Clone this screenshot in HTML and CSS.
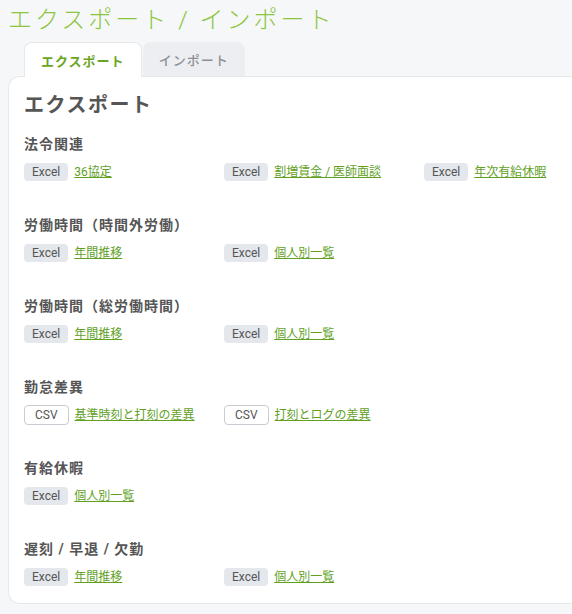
FILE: index.html
```html
<!DOCTYPE html>
<html lang="ja">
<head>
<meta charset="utf-8">
<title>エクスポート / インポート</title>
<link rel="stylesheet" href="styles.css">
</head>
<body>
<h1 class="page-title">エクスポート / インポート</h1>
<div class="tabs">
  <div class="tab tab-active">エクスポート</div>
  <div class="tab tab-inactive">インポート</div>
</div>
<div class="card">
  <h2 class="card-title">エクスポート</h2>

  <section class="group">
    <h3 class="group-title">法令関連</h3>
    <div class="items">
      <div class="item"><span class="badge badge-excel">Excel</span><a class="link" href="#">36協定</a></div>
      <div class="item"><span class="badge badge-excel">Excel</span><a class="link" href="#">割増賃金 / 医師面談</a></div>
      <div class="item"><span class="badge badge-excel">Excel</span><a class="link" href="#">年次有給休暇</a></div>
    </div>
  </section>

  <section class="group">
    <h3 class="group-title">労働時間（時間外労働）</h3>
    <div class="items">
      <div class="item"><span class="badge badge-excel">Excel</span><a class="link" href="#">年間推移</a></div>
      <div class="item"><span class="badge badge-excel">Excel</span><a class="link" href="#">個人別一覧</a></div>
    </div>
  </section>

  <section class="group">
    <h3 class="group-title">労働時間（総労働時間）</h3>
    <div class="items">
      <div class="item"><span class="badge badge-excel">Excel</span><a class="link" href="#">年間推移</a></div>
      <div class="item"><span class="badge badge-excel">Excel</span><a class="link" href="#">個人別一覧</a></div>
    </div>
  </section>

  <section class="group">
    <h3 class="group-title">勤怠差異</h3>
    <div class="items">
      <div class="item"><span class="badge badge-csv">CSV</span><a class="link" href="#">基準時刻と打刻の差異</a></div>
      <div class="item"><span class="badge badge-csv">CSV</span><a class="link" href="#">打刻とログの差異</a></div>
    </div>
  </section>

  <section class="group">
    <h3 class="group-title">有給休暇</h3>
    <div class="items">
      <div class="item"><span class="badge badge-excel">Excel</span><a class="link" href="#">個人別一覧</a></div>
    </div>
  </section>

  <section class="group">
    <h3 class="group-title">遅刻 / 早退 / 欠勤</h3>
    <div class="items">
      <div class="item"><span class="badge badge-excel">Excel</span><a class="link" href="#">年間推移</a></div>
      <div class="item"><span class="badge badge-excel">Excel</span><a class="link" href="#">個人別一覧</a></div>
    </div>
  </section>
</div>
</body>
</html>
```

FILE: styles.css
```css
html, body {
  overflow: hidden;
}

body {
  margin: 0;
  padding: 4px 0 0 8px;
  background: #f6f7f9;
  font-family: Roboto, "Noto Sans CJK JP", sans-serif;
  color: #555;
}

.page-title {
  margin: 0;
  font-size: 24px;
  font-weight: 300;
  letter-spacing: 3px;
  line-height: 32px;
  color: #8cc63f;
}

.tabs {
  display: flex;
  gap: 1px;
  margin: 6px 0 0 16px;
}

.tab {
  display: flex;
  align-items: center;
  height: 34px;
  padding: 0 16px;
  font-size: 13px;
  font-weight: 700;
  letter-spacing: 1px;
  border-radius: 8px 8px 0 0;
  box-sizing: border-box;
}

.tab-active {
  position: relative;
  z-index: 1;
  background: #fff;
  color: #6aa524;
  border: 1px solid #e6e8eb;
  border-bottom: none;
  height: 35px;
  margin-bottom: -1px;
}

.tab-inactive {
  background: #eceef1;
  color: #8c9096;
  font-weight: 500;
}

.card {
  background: #fff;
  border: 1px solid #e6e8eb;
  border-right: none;
  border-radius: 12px 0 0 12px;
  padding: 14px 15px 16px;
}

.card-title {
  margin: 0 0 15px;
  font-size: 20px;
  font-weight: 700;
  letter-spacing: 1.5px;
  line-height: 28px;
  color: #555;
}

.group {
  margin-bottom: 33px;
}

.group:last-child {
  margin-bottom: 0;
}

.group-title {
  margin: 0 0 8px;
  font-size: 14px;
  font-weight: 700;
  letter-spacing: 1px;
  line-height: 20px;
  color: #555;
}

.items {
  display: grid;
  grid-template-columns: 200px 200px minmax(0, 1fr);
}

.item {
  display: flex;
  align-items: center;
  gap: 6px;
  min-height: 20px;
  white-space: nowrap;
}

.badge {
  font-size: 12px;
  line-height: 18px;
  color: #555;
  border-radius: 4px;
}

.badge-excel {
  background: #e4e7eb;
  padding: 0 8px;
}

.badge-csv {
  background: #fff;
  border: 1px solid #c9cdd3;
  padding: 0 10px;
}

.link {
  font-size: 12px;
  line-height: 18px;
  color: #62a11f;
  text-decoration: underline;
}
```
